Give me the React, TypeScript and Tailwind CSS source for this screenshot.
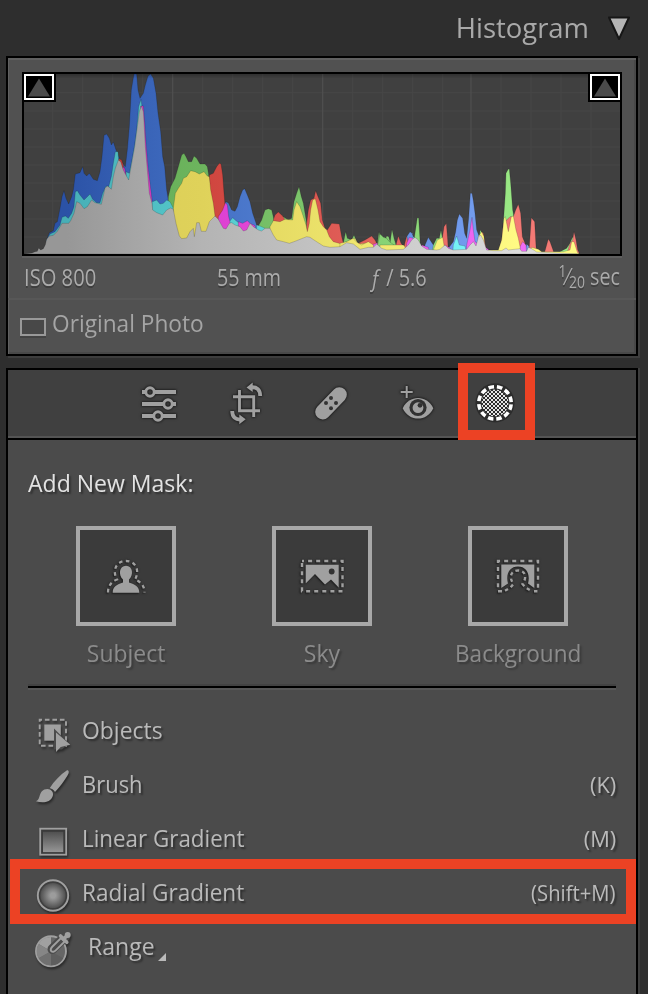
import type { ReactNode } from "react"

const iconShadow = "[filter:drop-shadow(0_0_1px_#1f1f1f)_drop-shadow(0_0_1px_#1f1f1f)]"
const tileShadow = "[filter:drop-shadow(0_0_1px_#262626)_drop-shadow(-1px_1px_0.5px_#262626)]"
const softShadow = "[filter:drop-shadow(1px_2px_1px_rgba(0,0,0,0.45))]"
const textShadow = "[text-shadow:2px_2px_2px_rgba(0,0,0,0.4)]"

// channel outlines, drawn back to front, three units per pixel
const CHANNELS = [
    {
        id: "blue", from: "#2b52a6", mid: "#4370c4", to: "#7ba4f5", points: [
            "140,612 140,570 148,548 160,542 165,520 172,515 180,475 186,440 192,422 198,445 206,462 215,440 220,420 226,372 240,368 248,350 252,370 260,378 268,370 280,388 292,392 300,365 306,320 312,256 320,252 328,265 334,285 340,276 348,300 360,330 376,350 382,300 388,230 394,120 402,72 410,72 414,120 420,145 430,130 436,105 444,78 452,72 460,85 468,130 474,190 482,245 488,320 494,350 500,420 505,450 520,480 520,612",
            "670,612 676,455 685,458 695,480 705,484 712,470 720,440 728,420 734,416 742,435 750,455 758,490 770,525 780,530 780,612",
            "1218,612 1220,560 1230,545 1236,550 1242,565 1250,612",
            "1270,612 1275,585 1285,562 1290,570 1300,585 1345,595 1360,575 1367,545 1372,510 1378,492 1388,505 1394,550 1400,565 1406,505 1411,430 1416,430 1420,452 1425,490 1430,540 1438,560 1445,585 1450,612",
            "1574,612 1580,582 1588,590 1590,612",
        ]
    },
    {
        id: "green", from: "#5faa50", mid: "#6db45e", to: "#9bea86", points: [
            "500,612 505,440 512,410 525,385 535,350 545,315 552,310 558,320 565,335 575,335 582,318 590,325 600,342 615,342 622,350 626,375 626,612",
            "775,612 775,528 785,510 795,480 805,476 815,480 822,510 850,500 865,510 875,505 882,455 890,430 897,410 904,440 910,460 915,490 920,520 925,612",
            "1028,612 1030,580 1037,545 1042,565 1055,570 1062,555 1070,575 1075,612",
            "1130,612 1132,580 1137,545 1142,565 1152,580 1160,558 1166,560 1172,580 1190,585 1192,612",
            "1130,612 1132,585 1140,552 1150,562 1160,565 1170,580 1176,538 1182,565 1188,585 1190,612",
            "1130,612 1131,595 1134,580 1140,552 1150,562 1160,565 1168,575 1190,590 1190,612",
            "1238,612 1242,570 1252,503 1256,504 1260,570 1262,612",
            "1295,612 1300,585 1310,565 1318,565 1323,540 1328,570 1330,612",
            "1436,612 1440,540 1448,550 1450,612",
            "1508,612 1510,520 1516,430 1518,370 1525,357 1528,358 1532,400 1538,480 1545,520 1548,612",
            "1670,612 1680,605 1700,595 1710,580 1718,560 1722,580 1725,612",
        ]
    },
    {
        id: "red", from: "#b8342f", mid: "#cf453e", to: "#f47a75", points: [
            "352,612 355,325 365,330 370,345 376,372 380,612",
            "626,612 628,375 640,370 650,350 658,340 663,342 668,375 672,430 678,500 685,612",
            "818,612 820,510 825,495 835,486 848,498 855,510 858,612",
            "918,612 920,520 925,480 932,450 942,445 947,422 954,440 962,460 967,510 975,535 982,540 995,520 1018,522 1025,560 1030,580 1032,612",
            "1070,612 1075,580 1095,570 1115,558 1125,570 1130,580 1130,612",
            "1186,612 1188,585 1195,558 1203,580 1212,590 1220,558 1226,585 1230,612",
            "1323,612 1325,580 1332,530 1339,520 1343,570 1345,612",
            "1440,612 1444,545 1450,550 1456,585 1460,612",
            "1493,612 1495,605 1505,570 1510,520 1530,500 1540,500 1547,480 1555,463 1562,490 1567,560 1575,580 1580,612",
            "1586,612 1588,590 1594,503 1604,515 1608,590 1610,612",
            "1632,612 1635,603 1645,567 1650,575 1660,603 1662,612",
            "1700,612 1710,580 1718,570 1722,545 1728,570 1733,600 1738,610",
        ]
    },
    {
        id: "cyan", from: "#47aeb6", mid: "#55c9cb", to: "#7dfbff", points: [
            "140,612 140,570 150,552 165,545 180,525 186,502 196,498 205,505 215,490 222,470 226,425 232,422 240,435 252,450 262,440 270,432 278,448 290,458 300,458 308,430 318,408 326,410 334,380 340,340 346,305 354,305 356,330 356,612",
            "376,612 378,365 388,370 396,330 404,285 410,240 416,170 423,148 426,170 428,612",
            "448,612 450,445 458,455 470,450 480,462 490,460 500,450 510,455 520,475 520,612",
            "686,612 688,515 698,503 708,512 718,520 720,612",
            "768,612 770,525 780,528 795,535 798,612",
            "1228,612 1230,570 1242,560 1245,612",
            "1358,612 1360,585 1370,558 1378,585 1395,588 1400,612",
            "1580,612 1585,590 1590,612",
        ]
    },
    {
        id: "magenta", from: "#c93bb0", mid: "#dd3fd0", to: "#f06cf5", points: [
            "420,612 422,168 430,168 434,215 438,280 444,350 450,400 456,450 457,612",
            "366,612 368,350 374,355 378,375 380,612",
            "318,612 320,410 330,415 332,612",
            "652,612 655,500 668,480 676,458 682,465 686,500 690,515 692,612",
            "713,612 715,515 728,520 742,512 750,520 765,527 768,612",
            "1113,612 1115,585 1132,578 1135,612",
            "1218,612 1220,580 1228,562 1240,565 1242,612",
            "1260,612 1265,585 1285,592 1290,612",
            "1330,612 1335,585 1350,594 1350,612",
            "1398,612 1400,585 1410,540 1416,502 1420,540 1425,575 1432,580 1435,612",
            "1450,612 1455,590 1470,602 1470,612",
            "1558,612 1560,590 1568,575 1578,585 1580,612",
        ]
    },
    {
        id: "yellow", from: "#d8cb55", mid: "#dfd25a", to: "#fffb84", points: [
            "518,612 520,475 526,430 535,415 545,400 550,385 560,380 572,362 585,365 598,372 612,365 622,378 628,380 632,420 640,460 645,498 645,612",
            "808,612 810,530 820,512 840,515 855,508 878,510 882,480 890,455 900,470 910,500 918,525 922,545 928,520 932,480 938,450 946,446 954,480 960,515 970,530 980,540 988,560 1000,575 1025,582 1040,575 1055,568 1065,565 1075,582 1095,580 1110,585 1110,612",
            "1018,612 1020,580 1040,575 1060,565 1068,575 1085,585 1105,575 1120,585 1122,612",
            "1138,612 1140,585 1210,585 1215,590 1218,612",
            "1300,612 1302,595 1312,570 1328,562 1332,585 1335,612",
            "1434,612 1435,560 1445,545 1452,560 1455,612",
            "1460,612 1465,600 1495,600 1505,570 1512,505 1516,500 1525,545 1534,500 1540,498 1548,540 1555,565 1560,590 1562,612",
            "1586,612 1595,592 1615,598 1625,605 1690,605 1710,600 1715,575 1722,575 1732,607 1738,612",
        ]
    },
    {
        id: "luma", from: "#979797", mid: "#b4b4b4", to: "#dcdcdc", points: [
            "72,612 96,609 105,605 112,604 116,594 122,600 130,596 136,584 140,568 148,558 160,556 172,544 186,520 206,520 212,512 222,490 230,455 240,460 252,476 262,470 275,450 285,458 304,463 315,415 322,408 328,412 334,418 340,380 346,355 355,330 362,335 370,360 376,372 386,390 394,345 404,290 412,230 418,185 424,168 430,185 432,215 436,290 442,360 448,430 456,460 458,480 470,488 488,495 500,480 512,474 520,478 528,520 538,558 545,566 560,564 570,545 580,535 583,560 590,518 598,518 604,544 618,544 628,515 645,498 655,508 670,535 678,537 688,520 695,518 705,525 720,530 730,543 740,540 750,520 760,530 775,540 785,543 795,535 810,535 820,555 830,570 850,575 868,580 885,574 900,568 920,560 930,562 945,572 970,588 990,592 1020,590 1040,578 1060,582 1080,598 1105,592 1120,592 1130,582 1145,595 1160,600 1210,598 1225,585 1235,570 1245,562 1255,570 1265,588 1280,598 1310,600 1320,598 1335,585 1345,595 1360,600 1400,598 1410,585 1420,575 1428,588 1435,562 1442,555 1450,570 1460,600 1480,602 1505,602 1518,594 1525,600 1560,596 1565,604 1580,604 1585,592 1595,596 1610,606 1740,612",
        ]
    },
]

const MINOR_X = [158, 248, 338, 428, 608, 698, 788, 878, 1058, 1148, 1238, 1328, 1503, 1593, 1683, 1773]
const MAJOR_X = [518, 968, 1413]
const LINES_Y = [128, 183, 237, 291, 345, 399, 453, 507, 561]

function ClipBox({ className }: { className: string }) {
    return (
        <div className={`absolute top-0 h-[28px] w-[32px] bg-black ${className}`}>
            <svg className="h-[26px] w-[30px]" viewBox="0 0 30 26">
                <rect x="1" y="1" width="28" height="24" fill="#000" stroke="#fff" strokeWidth="2" />
                <path d="M15 4.500 26 22.500H4z" fill="#4b4b4b" />
            </svg>
        </div>
    )
}

function Plot() {
    return (
        <div className="relative h-[184px] w-[600px] border-2 border-black bg-[#404040] shadow-[0_2px_0_#5f5f5f]">
            <svg className="block h-[180px] w-[596px]" viewBox="72 72 1788 540" preserveAspectRatio="none">
                <defs>
                    {CHANNELS.map(c => (
                        <linearGradient key={c.id} id={c.id} gradientUnits="userSpaceOnUse" x1="200" x2="1560" y1="0" y2="0">
                            <stop offset="0" stopColor={c.from} />
                            <stop offset="0.3" stopColor={c.mid} />
                            <stop offset="1" stopColor={c.to} />
                        </linearGradient>
                    ))}
                    <linearGradient id="fade" x1="0" x2="0" y1="0" y2="1">
                        <stop offset="0" stopColor="#000" stopOpacity="0.25" />
                        <stop offset="1" stopColor="#000" stopOpacity="0" />
                    </linearGradient>
                </defs>
                {MINOR_X.map(x => <path key={x} d={`M${x} 72V612`} stroke="#464646" strokeWidth="3" />)}
                {LINES_Y.map(y => <path key={y} d={`M72 ${y}H1860`} stroke="#464646" strokeWidth="3" />)}
                {MAJOR_X.map(x => <path key={x} d={`M${x} 72V612`} stroke="#4e4e4e" strokeWidth="4" />)}
                {CHANNELS.map(c => c.points.map((p, i) => (
                    <polygon key={c.id + i} points={p} fill={`url(#${c.id})`} stroke="#000" strokeOpacity="0.16" strokeWidth="3" />
                )))}
                <rect x="72" y="72" width="1788" height="14" fill="url(#fade)" />
            </svg>
            <ClipBox className="left-0" />
            <ClipBox className="right-0 pl-[2px]" />
        </div>
    )
}

function SlidersIcon() {
    return (
        <svg className={`size-11 ${iconShadow}`} viewBox="137 382 44 44" fill="none" stroke="#a0a0a0" strokeWidth="3.800">
            <path d="M142 392h4M154.500 392H176M142 404h21M172.500 404h3.500M142 416h11M162.500 416H176" />
            <g strokeWidth="2.900">
                <circle cx="150" cy="392" r="4.200" />
                <circle cx="168" cy="404" r="4.200" />
                <circle cx="158" cy="416" r="4.200" />
            </g>
        </svg>
    )
}

function CropIcon() {
    return (
        <svg className={`size-11 ${iconShadow}`} viewBox="224 382 44 44" fill="none" stroke="#a0a0a0">
            <path d="M239.500 390V410.700H260M233 396.700H253.700V417" strokeWidth="2.900" />
            <path d="M251 387.300C257 386.700 260.200 390 260.200 396" strokeWidth="3.800" />
            <path d="M246.500 387.500 252.700 382.500V392z" fill="#a0a0a0" stroke="none" />
            <path d="M232.200 411C232.200 417 235.500 420 241 419.500" strokeWidth="3.800" />
            <path d="M245.700 419.300 239.300 414.500V424.200z" fill="#a0a0a0" stroke="none" />
        </svg>
    )
}

function HealIcon() {
    return (
        <svg className={`size-11 ${iconShadow}`} viewBox="309 382 44 44">
            <rect x="311.500" y="395.800" width="39" height="15" rx="7.500" fill="#a0a0a0" transform="rotate(-46 331 403.300)" />
            <g fill="#333">
                <circle cx="331" cy="398" r="2" />
                <circle cx="326" cy="403" r="2" />
                <circle cx="336" cy="403" r="2" />
                <circle cx="331" cy="408.200" r="2" />
            </g>
        </svg>
    )
}

function EyeIcon() {
    return (
        <svg className={`size-11 ${iconShadow}`} viewBox="395 382 44 44">
            <path d="M406.700 386v12M400.700 392h12" stroke="#a0a0a0" strokeWidth="2" />
            <path d="M402.700 408.200C409 394.500 427 394.500 433.300 408.200 427 422 409 422 402.700 408.200z" fill="#a0a0a0" />
            <circle cx="418" cy="407.500" r="8.600" fill="#303030" />
            <circle cx="418" cy="407.700" r="5.400" fill="#a0a0a0" />
            <circle cx="420" cy="405.300" r="2.400" fill="#303030" />
        </svg>
    )
}

function MaskIcon() {
    return (
        <svg className="size-11" viewBox="473 382 44 44">
            <defs>
                <pattern id="checker" width="4" height="4" patternUnits="userSpaceOnUse" x="493" y="401">
                    <path d="M0 0h2v2H0zM2 2h2v2H2z" fill="#e4e4e4" />
                </pattern>
            </defs>
            <circle cx="495" cy="402.900" r="19.600" fill="#2c2c2c" />
            <circle cx="495" cy="402.900" r="16.200" fill="none" stroke="#fff" strokeWidth="3.600" strokeDasharray="5.500 2.982" strokeDashoffset="-1.490" />
            <circle cx="495" cy="402.900" r="13.400" fill="url(#checker)" />
        </svg>
    )
}

function SubjectIcon() {
    return (
        <svg className={`h-[40px] w-[52px] ${tileShadow}`} viewBox="100 556 52 40">
            <path d="M108 592.500C108 586 111 582 117 579.500 112 571 116 561 126 561S140 571 135 579.500C141 582 144.500 586 144.500 592.500" fill="none" stroke="#a0a0a0" strokeWidth="2.300" strokeDasharray="3.600 3.400" />
            <path d="M112.700 592.700C112.700 586.500 117 584.500 123 582.500V579.500C118.200 575 119 565.700 126 565.700S133.800 575 129 579.500V582.500C135 584.500 139.300 586.500 139.300 592.700z" fill="#a0a0a0" />
        </svg>
    )
}

function SkyIcon() {
    return (
        <svg className={`h-[40px] w-[52px] ${tileShadow}`} viewBox="296 556 52 40">
            <path d="M302 561H342.500V591.300H302z" fill="none" stroke="#a0a0a0" strokeWidth="2.400" strokeDasharray="4 4.090" strokeDashoffset="2" />
            <path d="M305.700 564.700H338.700V587.500L331 579.500 325 584.500 315 574 305.700 583.500z" fill="#a0a0a0" />
            <circle cx="331.700" cy="571.500" r="2.900" fill="#333" />
        </svg>
    )
}

function BackgroundIcon() {
    return (
        <svg className={`h-[40px] w-[52px] ${tileShadow}`} viewBox="492 556 52 40">
            <path d="M501.300 564.500H534.300V588L528 583.500C530.500 574 526.500 566.500 518 566.500S505.500 574 508 583.500L501.300 588z" fill="#a0a0a0" />
            <path d="M502 591.300H498V561H538V591.300H534" fill="none" stroke="#a0a0a0" strokeWidth="2.400" strokeDasharray="4 4.090" />
            <path d="M505 590.800 510.500 587.500 513.500 584C508.500 577 511 570.500 518 570.500S527.500 577 522.500 584L525.500 587.500 531 590.800" fill="none" stroke="#a0a0a0" strokeWidth="2.400" strokeDasharray="3.500 3.200" />
        </svg>
    )
}

function ObjectsIcon() {
    return (
        <svg className={`size-[42px] ${softShadow}`} viewBox="32 712.500 42 42">
            <path d="M39.700 719.300H66V745.300H39.700z" fill="none" stroke="#a0a0a0" strokeWidth="1.900" strokeDasharray="4.600 2.900" strokeDashoffset="2.300" />
            <rect x="44.300" y="724" width="16.500" height="16.200" fill="#a0a0a0" />
            <path d="M54 728V749H62L69 743z" fill="#4b4b4b" />
            <path d="M56 732V751.500L60.700 746.500 70.300 744.300z" fill="#a0a0a0" />
        </svg>
    )
}

function BrushIcon() {
    return (
        <svg className={`size-[42px] ${softShadow}`} viewBox="32 766.500 42 42" fill="#a0a0a0">
            <path d="M67 769.800C69.500 769.800 69 772.500 67.500 775 64 781 60 786 55 791.500 54 789.500 52 788.200 49.800 787.500 54 781 60 774.500 67 769.800z" />
            <path d="M47.500 788.500C51.500 788.700 53.800 792 52.800 795.500 50.500 802.500 42 802.800 36 800.800 41.500 799 37.500 789 47.500 788.500z" />
        </svg>
    )
}

function LinearIcon() {
    return (
        <svg className={`size-[42px] ${softShadow}`} viewBox="32 820.500 42 42">
            <defs>
                <linearGradient id="linear" x1="0" x2="0" y1="0" y2="1">
                    <stop offset="0" stopColor="#505050" />
                    <stop offset="1" stopColor="#969696" />
                </linearGradient>
            </defs>
            <rect x="40.200" y="828.200" width="26" height="26" fill="#3a3a3a" stroke="#a0a0a0" strokeWidth="1.800" />
            <rect x="43" y="831.300" width="20.300" height="20.300" fill="url(#linear)" />
        </svg>
    )
}

function RadialIcon() {
    return (
        <svg className={`size-[42px] ${softShadow}`} viewBox="32 874.500 42 42">
            <defs>
                <radialGradient id="radial">
                    <stop offset="0.200" stopColor="#9c9c9c" />
                    <stop offset="1" stopColor="#505050" />
                </radialGradient>
            </defs>
            <circle cx="53" cy="895" r="15.200" fill="#3e3e3e" stroke="#a0a0a0" strokeWidth="1.900" />
            <circle cx="53" cy="895" r="12.600" fill="url(#radial)" />
        </svg>
    )
}

function RangeIcon() {
    return (
        <svg className={`size-[42px] ${softShadow}`} viewBox="32 928.500 42 42">
            <circle cx="51" cy="950.700" r="15" fill="#666" stroke="#a0a0a0" strokeWidth="1.900" />
            <path d="M51 950.700V936.500A14.200 14.200 0 0 0 38.700 943.600z" fill="#a0a0a0" />
            <path d="M51 950.700 38.700 943.600A14.200 14.200 0 0 0 38.700 957.800z" fill="#868686" />
            <path d="M51 950.700 38.700 957.800A14.200 14.200 0 0 0 51 964.900z" fill="#707070" />
            <path d="M51 950.700V964.900A14.200 14.200 0 0 0 63.300 957.800z" fill="#5e5e5e" />
            <path d="M52.500 948.500 65 936.500" stroke="#4b4b4b" strokeWidth="10" strokeLinecap="round" />
            <path d="M51 950.400C50.200 949 51 947.500 52.500 946L61 937.600 64.500 941.200 56 949.600C54.200 951.400 52.500 952 51 950.400z" fill="#4b4b4b" stroke="#a0a0a0" strokeWidth="1.900" />
            <path d="M60.500 935.500 66.800 941.800M63.500 938.500 67.500 934.700" stroke="#a0a0a0" strokeWidth="3.600" strokeLinecap="round" />
            <circle cx="67.700" cy="934.500" r="3" fill="#a0a0a0" />
        </svg>
    )
}

function MaskTile({ label, icon, className }: { label: string, icon: ReactNode, className: string }) {
    return (
        <div className="flex w-[196px] flex-col items-center">
            <div className="flex size-[100px] items-center justify-center border-4 border-[#a8a8a8] bg-[#3b3b3b]">
                {icon}
            </div>
            <span className={`mt-[10px] mb-px text-[24px] leading-[34px] text-[#8b8b8b] [text-shadow:2px_2px_2px_rgba(0,0,0,0.25)] ${className}`}>{label}</span>
        </div>
    )
}

function ToolRow({ icon, label, shortcut, className, keyClass = "" }: { icon: ReactNode, label: string, shortcut?: string, className: string, keyClass?: string }) {
    return (
        <div className="flex h-[54px] items-center pl-6 pr-5">
            <div className="mt-[7px]">{icon}</div>
            <span className={`origin-left text-[24px] leading-[34px] text-[#bababa] ${textShadow} ${className}`}>{label}</span>
            {shortcut && <span className={`ml-auto mt-[2px] origin-right text-[21px] leading-[30px] text-[#bababa] ${textShadow} ${keyClass}`}>{shortcut}</span>}
        </div>
    )
}

export default function App() {
    return (
        <div className="flex h-[994px] w-[648px] flex-col overflow-hidden bg-[#2e2e2e] font-['Open_Sans','Noto_Sans',sans-serif]">
            <header className="flex h-14 shrink-0 items-center justify-end pr-[17px] text-[#a9a9a9]">
                <h1 className="mb-[3px] mr-[18px] origin-right scale-x-[0.98] text-[28px] leading-10">Histogram</h1>
                <svg className="h-[26px] w-6" viewBox="0 0 24 26">
                    <path d="M2 2.500H22L12 24z" fill="#b4b4b4" stroke="#161616" strokeWidth="2" strokeLinejoin="round" />
                </svg>
            </header>

            <section className="ml-1.5 h-[300px] w-[632px] shrink-0 border-2 border-black bg-[#515151] shadow-[2px_2px_0_#3d3d3d]">
                <div className="h-full shadow-[inset_1px_2px_0_#606060,inset_-2px_-2px_0_#484848]">
                    <div className="px-3.5 pt-3.5">
                        <Plot />
                        <div className="flex h-[42px] items-center px-0.5 text-[24px] leading-[42px] whitespace-nowrap text-[#ababab] [text-shadow:0_2px_0_#3e3e3e]">
                            <span className="w-[193px]"><span className="inline-block origin-left scale-x-[0.84]">ISO 800</span></span>
                            <span className="w-[153px]"><span className="inline-block origin-left scale-x-[0.82]">55 mm</span></span>
                            <span><span className="inline-block origin-left scale-x-[0.83]"><i>ƒ</i> / 5.6</span></span>
                            <span className="ml-auto inline-block origin-right scale-x-[0.82]"><span className="relative -top-[8px] text-[17px]">1</span>⁄<span className="relative top-[3px] text-[17px]">20</span> sec</span>
                        </div>
                    </div>
                    <div className="h-0.5 bg-[#575757]" />
                    <div className="flex h-[50px] items-center pl-3">
                        <div className="mt-[4px] h-[18px] w-[26px] border-2 border-[#999] bg-[#484848] shadow-[0_2px_0_#434343]" />
                        <span className="mb-1 ml-1.5 origin-left scale-x-[0.965] text-[23.5px] leading-8 text-[#a5a5a5]">Original Photo</span>
                    </div>
                </div>
            </section>

            <section className="mt-3 ml-1.5 h-[626px] w-[632px] shrink-0 border-2 border-b-0 border-black bg-[#4b4b4b] shadow-[2px_0_0_#3d3d3d]">
                <nav className="flex h-[70px] items-center border-b-2 border-black bg-[#404040] pl-[129px] shadow-[inset_0_-2px_0_#545454]">
                    <SlidersIcon />
                    <div className="ml-[43px]"><CropIcon /></div>
                    <div className="ml-[41px]"><HealIcon /></div>
                    <div className="ml-[42px]"><EyeIcon /></div>
                    <div className="relative ml-[34px]">
                        <MaskIcon />
                        <div className="absolute -top-[19px] -left-[15px] h-[77px] w-[77px] border-10 border-[#ec4224]" />
                    </div>
                </nav>

                <h2 className={`mt-[26px] ml-5 w-fit origin-left scale-x-[0.98] text-[23.5px] leading-[34px] text-[#e2e2e2] ${textShadow}`}>Add New Mask:</h2>
                <div className="mt-[26px] ml-5 flex">
                    <MaskTile label="Subject" icon={<SubjectIcon />} className="scale-x-[0.955]" />
                    <MaskTile label="Sky" icon={<SkyIcon />} className="scale-x-[0.96]" />
                    <MaskTile label="Background" icon={<BackgroundIcon />} className="scale-x-[0.94]" />
                </div>
                <div className="mx-5 mt-[15px] h-0.5 bg-black shadow-[0_2px_0_#575757,0_-2px_0_#434343]" />

                <div className="pt-[15px]">
                    <ToolRow icon={<ObjectsIcon />} label="Objects" className="ml-2 scale-x-[0.955]" />
                    <ToolRow icon={<BrushIcon />} label="Brush" shortcut="(K)" className="ml-2 scale-x-[0.915]" keyClass="scale-x-[1.04]" />
                    <ToolRow icon={<LinearIcon />} label="Linear Gradient" shortcut="(M)" className="ml-2 scale-x-[0.932]" keyClass="scale-x-[1.04]" />
                    <div className="relative">
                        <ToolRow icon={<RadialIcon />} label="Radial Gradient" shortcut="(Shift+M)" className="ml-2 scale-x-[0.94]" keyClass="scale-x-[0.965]" />
                        <div className="absolute -top-[6px] left-[2px] h-[65px] w-[626px] border-10 border-[#ec4224]" />
                    </div>
                    <div className="relative">
                        <ToolRow icon={<RangeIcon />} label="Range" className="ml-3.5 scale-x-[0.96]" />
                        <svg className="absolute top-[34px] left-[150px] size-2" viewBox="0 0 8 8">
                            <path d="M8 0V8H0z" fill="#bababa" />
                        </svg>
                    </div>
                </div>
            </section>
        </div>
    )
}
